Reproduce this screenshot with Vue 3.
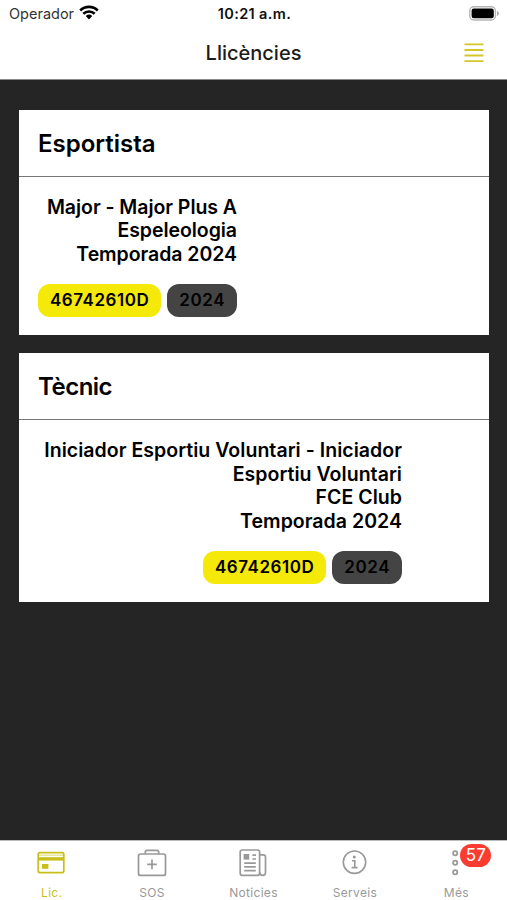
<script setup>
const cards = [
  {
    title: 'Esportista',
    kind: 'athlete',
    lines: ['Major - Major Plus A', 'Espeleologia', 'Temporada 2024'],
    id: '46742610D',
    year: '2024',
  },
  {
    title: 'Tècnic',
    kind: 'coach',
    lines: ['Iniciador Esportiu Voluntari - Iniciador', 'Esportiu Voluntari', 'FCE Club', 'Temporada 2024'],
    id: '46742610D',
    year: '2024',
  },
]
const tabs = [
  { name: 'Lic.', icon: 'card', active: true },
  { name: 'SOS', icon: 'kit' },
  { name: 'Noticies', icon: 'news' },
  { name: 'Serveis', icon: 'info' },
  { name: 'Més', icon: 'more', badge: 57 },
]
</script>

<template>
  <div class="screen">
    <header class="top">
      <div class="status">
        <div class="carrier">
          <span>Operador</span>
          <svg class="wifi" width="20" height="15" viewBox="0 0 20 15">
            <g fill="none" stroke="#000" stroke-width="2.6">
              <path d="M1.2 5.5a12.6 12.6 0 0 1 17.6 0" />
              <path d="M4.3 8.8a8.2 8.2 0 0 1 11.4 0" />
            </g>
            <path d="M6.8 11.1a4.7 4.7 0 0 1 6.4 0L10 14.4z" fill="#000" />
          </svg>
        </div>
        <div class="time">10:21 a.m.</div>
        <div class="power">
          <svg width="31" height="15" viewBox="0 0 31 15">
            <rect x="0.8" y="0.8" width="25.6" height="13.2" rx="4" fill="#fff" stroke="#b5b5b5" stroke-width="1.4" />
            <rect x="2.6" y="2.6" width="22.2" height="9.7" rx="2.2" fill="#000" />
            <path d="M28 5v5c2.5-1 2.5-4 0-5z" fill="#aaa" />
          </svg>
        </div>
      </div>
      <div class="nav">
        <h1>Llicències</h1>
        <svg class="menu" width="20" height="20" viewBox="0 0 20 20">
          <path d="M.5 1.4h19M.5 7h19M.5 12.5h19M.5 18.1h19" stroke="#d3c72c" stroke-width="1.9" />
        </svg>
      </div>
    </header>

    <main>
      <section v-for="c in cards" :key="c.title" class="card" :class="c.kind">
        <h2>{{ c.title }}</h2>
        <div class="body">
          <p v-for="l in c.lines" :key="l">{{ l }}</p>
          <div class="chips">
            <span class="chip yellow">{{ c.id }}</span>
            <span class="chip dark">{{ c.year }}</span>
          </div>
        </div>
      </section>
    </main>

    <footer>
      <div v-for="t in tabs" :key="t.name" class="tab" :class="{ active: t.active }">
        <div class="glyph">
          <svg v-if="t.icon === 'card'" width="30" height="30" viewBox="0 0 30 30" fill="none" stroke="currentColor">
            <rect x="2.2" y="4.7" width="25.6" height="20" rx="2" stroke-width="1.7" />
            <path d="M2 10.9h26" stroke-width="3.4" />
            <path d="M2.5 7.2h25" stroke-width="1.4" opacity=".45" />
            <rect x="6" y="16" width="6.4" height="4.8" fill="currentColor" stroke="none" />
          </svg>
          <svg v-else-if="t.icon === 'kit'" width="30" height="30" viewBox="0 0 30 30" fill="none" stroke="currentColor" stroke-width="1.7">
            <rect x="1.5" y="6" width="27" height="21.4" rx="2" />
            <path d="M8.3 6V4.3a2 2 0 0 1 2-2h9.4a2 2 0 0 1 2 2V6M15 11.6v9.6M10.2 16.4h9.6" />
          </svg>
          <svg v-else-if="t.icon === 'news'" width="30" height="30" viewBox="0 0 30 30" fill="none" stroke="currentColor" stroke-width="1.7">
            <rect x="2.2" y="2" width="19.4" height="25.3" rx="2" />
            <path d="M21.6 6.8h3.6a2.3 2.3 0 0 1 2.3 2.3v15.5a2.8 2.8 0 0 1-5.7 0" />
            <rect x="5.6" y="6" width="5.6" height="5.6" fill="currentColor" stroke="none" />
            <path d="M14.4 7.2h3.6M14.4 11h3.6M6.2 15.2h11.6M6.2 18.9h11.6M6.2 22.7h11.6" />
          </svg>
          <svg v-else-if="t.icon === 'info'" width="30" height="30" viewBox="0 0 30 30" fill="none" stroke="currentColor" stroke-width="1.6">
            <circle cx="14.5" cy="14.2" r="11.2" />
            <circle cx="14.3" cy="9" r="1.5" fill="currentColor" stroke="none" />
            <path d="M12 12.8h2.8v6.6M11.6 19.6h6" />
          </svg>
          <svg v-else width="30" height="30" viewBox="0 0 30 30" fill="none" stroke="currentColor" stroke-width="1.8">
            <circle cx="14.2" cy="5.2" r="2.1" />
            <circle cx="14.2" cy="14.7" r="2.1" />
            <circle cx="14.2" cy="24.2" r="2.1" />
          </svg>
          <span v-if="t.badge" class="badge">{{ t.badge }}</span>
        </div>
        <span class="label">{{ t.name }}</span>
      </div>
    </footer>
  </div>
</template>

<style>
body {
  margin: 0;
  background: #252525;
}
</style>

<style scoped>
.screen {
  width: 507px;
  height: 900px;
  display: flex;
  flex-direction: column;
  overflow: hidden;
  background: #252525;
  color: #000;
  font-family: Inter, "Liberation Sans", sans-serif;
}
.top {
  height: 80px;
  box-sizing: border-box;
  background: #fff;
  border-bottom: 1px solid #8a8a8a;
}
.status {
  height: 27px;
  display: grid;
  grid-template-columns: 1fr auto 1fr;
  align-items: center;
  padding: 0 7px 0 9px;
  font-size: 14.5px;
}
.carrier {
  display: flex;
  align-items: center;
  gap: 5px;
  color: #333;
}
.wifi {
  margin-top: -2px;
}
.time {
  font-weight: 600;
  letter-spacing: 0.35px;
  color: #111;
}
.power {
  display: flex;
  justify-content: flex-end;
}
.nav {
  height: 51px;
  display: grid;
  grid-template-columns: 1fr auto 1fr;
  align-items: center;
  padding: 0 23px;
}
h1 {
  grid-column: 2;
  margin: 0;
  font-size: 20px;
  font-weight: 500;
  color: #1c1c1c;
}
.menu {
  justify-self: end;
}
main {
  flex: 1;
  padding: 30px 18px 0 19px;
  display: flex;
  flex-direction: column;
  gap: 18px;
}
.card {
  background: #fff;
}
h2 {
  margin: 0;
  height: 65.5px;
  line-height: 67px;
  padding-left: 19px;
  border-bottom: 1px solid #777;
  font-size: 24px;
  font-weight: 600;
  letter-spacing: 0;
}
.coach h2 {
  height: 66px;
  letter-spacing: -0.5px;
}
.body {
  display: flex;
  flex-direction: column;
  align-items: flex-end;
  width: 199px;
  padding: 19px 0 18px 19px;
}
.coach .body {
  width: 364px;
}
p {
  margin: 0;
  font-size: 19.5px;
  line-height: 23.6px;
  font-weight: 600;
  letter-spacing: -0.05px;
  white-space: nowrap;
}
.coach p {
  line-height: 23.5px;
  letter-spacing: 0.04px;
}
.chips {
  display: flex;
  gap: 6px;
  margin-top: 18px;
}
.chip {
  height: 33px;
  line-height: 33px;
  padding: 0 12px;
  border-radius: 12px;
  font-size: 17px;
  font-weight: 600;
  letter-spacing: 0.55px;
}
.yellow {
  background: #f5e90a;
}
.dark {
  background: #444;
}
footer {
  height: 60px;
  box-sizing: border-box;
  border-top: 1px solid #bbb;
  background: #fff;
  display: grid;
  grid-template-columns: repeat(5, 1fr);
}
.tab {
  display: flex;
  flex-direction: column;
  align-items: center;
  padding-top: 7px;
  color: #999;
}
.tab.active {
  color: #c9bf1b;
}
.glyph {
  position: relative;
  height: 30px;
}
.glyph svg {
  display: block;
}
.label {
  margin-top: 7px;
  font-size: 12px;
  line-height: 16px;
  letter-spacing: 0.3px;
}
.active .label {
  padding-left: 2px;
}
.badge {
  position: absolute;
  left: 19px;
  top: -4px;
  width: 31px;
  height: 23px;
  border-radius: 12px;
  background: #fc3b30;
  color: #fff;
  font-size: 17px;
  line-height: 23px;
  text-align: center;
}
</style>
